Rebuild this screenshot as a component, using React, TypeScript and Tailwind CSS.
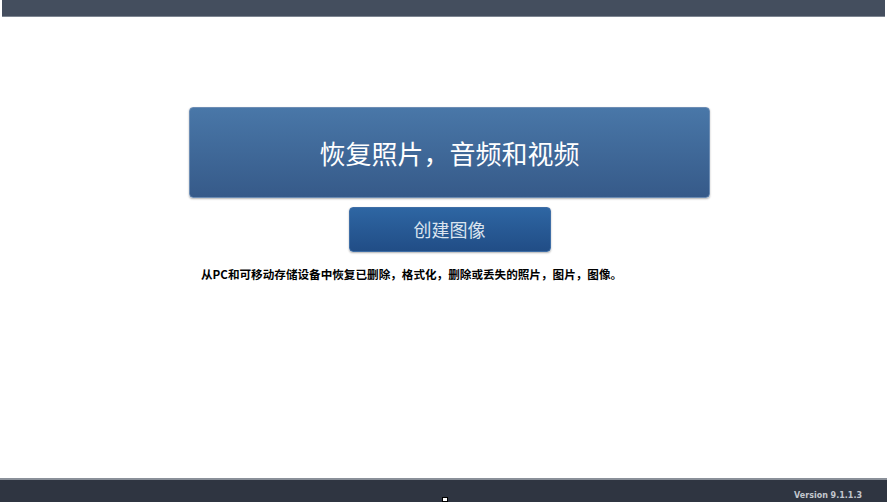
import React from "react";

export default function App() {
  return (
    <div className="relative flex h-[502px] w-[887px] flex-col overflow-hidden bg-white" style={{ fontFamily: '"Noto Sans CJK SC", "Noto Sans", sans-serif' }}>
      <div className="ml-[2px] mr-[2px] h-[17px] shrink-0 border-b border-[#7d8591] bg-[#444e5e]" />
      <div className="flex flex-1 flex-col items-center">
        <button className="mt-[90px] ml-[12px] flex h-[91px] w-[521px] items-center justify-center rounded-[4px] border border-[#6d8db4] bg-gradient-to-b from-[#4977a8] to-[#365a89] text-[26px] text-white shadow-[0_1px_2px_rgba(0,0,0,0.3)]" style={{ fontFamily: '"Noto Sans CJK SC", serif' }}>
          恢复照片，音频和视频
        </button>
        <button className="mt-[9px] ml-[12px] flex h-[45px] w-[202px] items-center justify-center rounded-[4px] border border-[#3f6ea6] bg-gradient-to-b from-[#2e66a3] to-[#214d86] text-[18px] text-[#dbe4ef] shadow-[0_1px_2px_rgba(0,0,0,0.3)]">
          创建图像
        </button>
        <div className="mt-[14px] w-full pl-[201px] text-[11.6px] font-bold leading-[16px] text-black">
          从PC和可移动存储设备中恢复已删除，格式化，删除或丢失的照片，图片，图像。
        </div>
      </div>
      <div className="flex h-[24px] shrink-0 items-center justify-end border-t-2 border-[#8a9099] bg-[#2f3541] pr-[25px] pt-[10px]">
        <span className="text-[8px] font-bold text-[#c3c7ce]" style={{ fontFamily: '"DejaVu Sans", sans-serif' }}>Version 9.1.1.3</span>
      </div>
      <div className="absolute left-[442px] top-[497px] h-[5px] w-[6px] border border-black bg-white" />
    </div>
  );
}
